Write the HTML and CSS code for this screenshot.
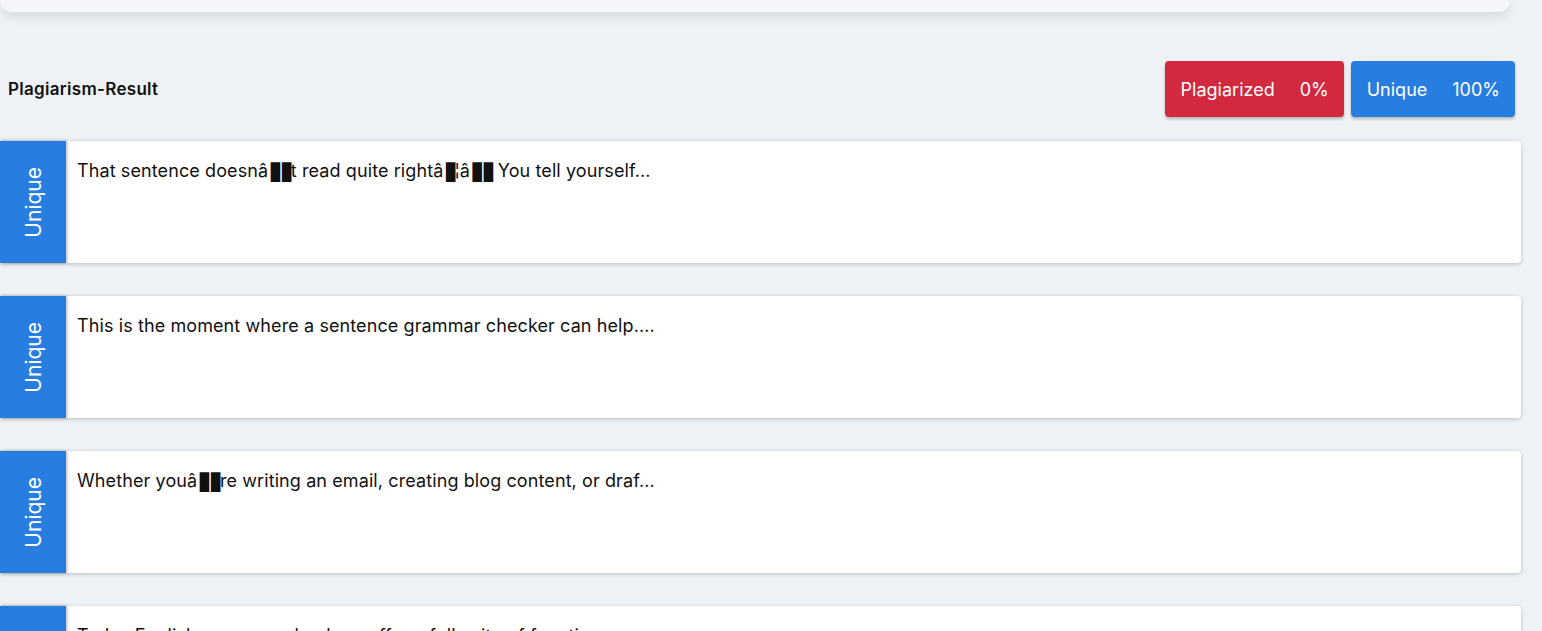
FILE: index.html
```html
<!DOCTYPE html>
<html lang="en">

<head>
    <meta charset="UTF-8">
    <meta name="viewport" content="width=device-width, initial-scale=1.0">
    <title>Plagiarism Result</title>
    <link rel="stylesheet" href="styles.css">
</head>

<body>
    <div class="top-card"></div>

    <div class="container">
        <div class="result-header">
            <h3>Plagiarism-Result</h3>
            <div class="score-group">
                <div class="score plagiarized"><span>Plagiarized</span><span>0%</span></div>
                <div class="score unique"><span>Unique</span><span>100%</span></div>
            </div>
        </div>

        <div class="sentence-list">
            <div class="sentence-item">
                <div class="tag"><span>Unique</span></div>
                <p>That sentence doesnâ<span class="bad">▮▮</span>t read quite rightâ<span class="bad">▮</span>¦â<span class="bad">▮▮</span> You tell yourself...</p>
            </div>
            <div class="sentence-item">
                <div class="tag"><span>Unique</span></div>
                <p>This is the moment where a sentence grammar checker can help....</p>
            </div>
            <div class="sentence-item">
                <div class="tag"><span>Unique</span></div>
                <p>Whether youâ<span class="bad">▮▮</span>re writing an email, creating blog content, or draf...</p>
            </div>
            <div class="sentence-item">
                <div class="tag"><span>Unique</span></div>
                <p>Today English grammar checkers offer a full suite of functions...</p>
            </div>
        </div>
    </div>
</body>

</html>
```

FILE: styles.css
```css
:root {
    --bg: #eef2f6;
    --red: #d3293f;
    --blue: #287de0;
    --dark: #111;
}

body {
    font-family: Inter, 'Noto Sans', sans-serif;
    color: var(--dark);
    background-color: var(--bg);
    margin: 0;
    overflow: hidden;
}

.top-card {
    height: 12px;
    margin-right: 32px;
    background: #f4f6f9;
    border-radius: 0 0 14px 14px;
    box-shadow: 0 4px 12px rgba(0, 0, 0, 0.12);
}

.container {
    padding-right: 21px;
}

.result-header {
    display: flex;
    align-items: center;
    justify-content: space-between;
    margin-top: 49px;
    padding: 0 6px 0 8px;
}

.result-header h3 {
    margin: 0;
    font-size: 17px;
    font-weight: 600;
    letter-spacing: 0.3px;
}

.score-group {
    display: flex;
    gap: 7px;
}

.score {
    display: flex;
    gap: 25px;
    align-items: center;
    height: 56px;
    padding: 0 15px 0 16px;
    border-radius: 4px;
    color: white;
    font-size: 18px;
    box-shadow: 0 2px 3px rgba(0, 0, 0, 0.25);
}

.plagiarized {
    background-color: var(--red);
}

.unique {
    background-color: var(--blue);
}

.sentence-list {
    display: flex;
    flex-direction: column;
    gap: 33px;
    margin-top: 24px;
}

.sentence-item {
    display: flex;
    height: 122px;
    background: white;
    border-radius: 0 4px 4px 0;
    box-shadow: 0 1px 4px rgba(0, 0, 0, 0.22);
}

.tag {
    display: flex;
    align-items: center;
    justify-content: center;
    width: 66px;
    flex-shrink: 0;
    background-color: var(--blue);
    color: white;
    font-size: 21px;
    box-shadow: 1px 0 3px rgba(0, 0, 0, 0.3);
}

.tag span {
    writing-mode: vertical-rl;
    transform: rotate(180deg);
}

.sentence-item p {
    margin: 0;
    padding: 19px 11px;
    font-size: 18px;
    line-height: 1.2;
    letter-spacing: 0.1px;
}

.bad {
    font-family: 'DejaVu Sans', sans-serif;
    font-size: 26px;
    line-height: 10px;
    letter-spacing: -3px;
    vertical-align: -2px;
}
```
